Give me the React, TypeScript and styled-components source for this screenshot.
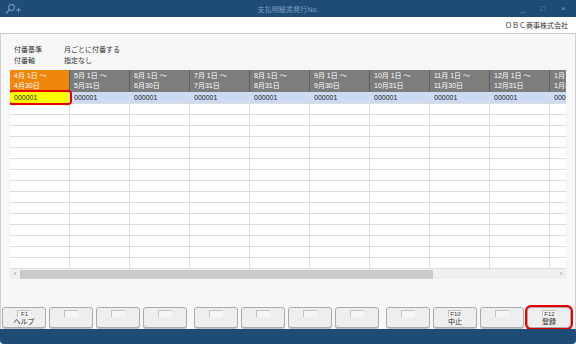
import styled, { createGlobalStyle } from "styled-components";

const GlobalStyle = createGlobalStyle`
  html, body {
    margin: 0;
    padding: 0;
    background: #ffffff;
  }
  body {
    font-family: "Liberation Sans", "Noto Sans CJK JP", sans-serif;
  }
`;

interface Period {
  from: string;
  to: string;
}

const periods: Period[] = [
  { from: "4月 1日 ～", to: "4月30日" },
  { from: "5月 1日 ～", to: "5月31日" },
  { from: "6月 1日 ～", to: "6月30日" },
  { from: "7月 1日 ～", to: "7月31日" },
  { from: "8月 1日 ～", to: "8月31日" },
  { from: "9月 1日 ～", to: "9月30日" },
  { from: "10月 1日 ～", to: "10月31日" },
  { from: "11月 1日 ～", to: "11月30日" },
  { from: "12月 1日 ～", to: "12月31日" },
  { from: "1月 1日 ～", to: "1月31日" },
];

const EMPTY_ROWS = 15;

const keyGroups: { key: string; label: string; marked?: boolean }[][] = [
  [{ key: "F1", label: "ヘルプ" }, { key: "", label: "" }, { key: "", label: "" }, { key: "", label: "" }],
  [{ key: "", label: "" }, { key: "", label: "" }, { key: "", label: "" }, { key: "", label: "" }],
  [{ key: "", label: "" }, { key: "F10", label: "中止" }, { key: "", label: "" }, { key: "F12", label: "登録", marked: true }],
];

const App = () => {
  return (
    <>
      <GlobalStyle />
      <Window>
        <TitleBar>
          <TitleIcon width="18" height="12" viewBox="0 0 18 12">
            <circle cx="7.5" cy="4.5" r="3" fill="none" stroke="#6d8db3" strokeWidth="1.3" />
            <line x1="5.4" y1="6.8" x2="2" y2="10.5" stroke="#6d8db3" strokeWidth="1.6" />
            <line x1="12" y1="7" x2="17" y2="7" stroke="#6d8db3" strokeWidth="1.1" />
            <line x1="14.5" y1="4.5" x2="14.5" y2="9.5" stroke="#6d8db3" strokeWidth="1.1" />
          </TitleIcon>
          <TitleText>支払明細書発行No.</TitleText>
          <WinControls>
            <WinButton>_</WinButton>
            <WinButton>□</WinButton>
            <WinButton>×</WinButton>
          </WinControls>
        </TitleBar>
        <CompanyBar>ＯＢＣ商事株式会社</CompanyBar>
        <Content>
          <Settings>
            <span>付番基準</span>
            <span>月ごとに付番する</span>
            <span>付番軸</span>
            <span>指定なし</span>
          </Settings>
          <Grid>
            <HeaderRow>
              {periods.map((p, i) => (
                <HeaderCell key={i} $active={i === 0}>
                  <div>{p.from}</div>
                  <div>{p.to}</div>
                </HeaderCell>
              ))}
            </HeaderRow>
            <Row $selected>
              {periods.map((_, i) => (
                <Cell key={i} $marked={i === 0}>
                  000001
                </Cell>
              ))}
            </Row>
            {Array.from({ length: EMPTY_ROWS }).map((_, r) => (
              <Row key={r}>
                {periods.map((_, i) => (
                  <Cell key={i} />
                ))}
              </Row>
            ))}
            <ScrollBar>
              <ScrollArrow>‹</ScrollArrow>
              <ScrollThumb />
              <ScrollTrack />
              <ScrollArrow>›</ScrollArrow>
            </ScrollBar>
          </Grid>
          <KeyBar>
            {keyGroups.map((group, g) => (
              <KeyGroup key={g}>
                {group.map((k, i) => (
                  <FnButton key={i} $marked={k.marked}>
                    <KeyLabel>{k.key}</KeyLabel>
                    <KeyCaption>{k.label}</KeyCaption>
                  </FnButton>
                ))}
              </KeyGroup>
            ))}
          </KeyBar>
        </Content>
        <StatusBar />
      </Window>
    </>
  );
};

export default App;

const Window = styled.div`
  width: 576px;
  height: 344px;
  display: flex;
  flex-direction: column;
  background: #f7f7f7;
  overflow: hidden;
`;

const TitleBar = styled.div`
  height: 17px;
  flex: 0 0 17px;
  background: #1e4c77;
  display: grid;
  grid-template-columns: 1fr auto 1fr;
  align-items: center;
`;

const TitleIcon = styled.svg`
  margin-left: 4px;
`;

const TitleText = styled.div`
  font-size: 7px;
  color: #7f9dc0;
  letter-spacing: 0.1px;
`;

const WinControls = styled.div`
  justify-self: end;
  display: flex;
  gap: 6px;
  padding-right: 6px;
`;

const WinButton = styled.span`
  width: 14px;
  text-align: center;
  font-size: 8px;
  line-height: 10px;
  color: #7f9dc0;
`;

const CompanyBar = styled.div`
  height: 16px;
  flex: 0 0 16px;
  background: #ffffff;
  border-bottom: 1px solid #c8c8c8;
  text-align: right;
  padding-right: 8px;
  font-size: 7px;
  line-height: 17px;
  color: #333333;
`;

const Content = styled.div`
  flex: 1;
  display: flex;
  flex-direction: column;
  padding-top: 10px;
  border-left: 1px solid #d0d0d0;
  border-right: 1px solid #d0d0d0;
`;

const Settings = styled.div`
  display: grid;
  grid-template-columns: 50px auto;
  margin-left: 13px;
  font-size: 7px;
  line-height: 11px;
  color: #333333;
`;

const Grid = styled.div`
  margin: 4px 0 0 9px;
  width: 556px;
  overflow: hidden;
`;

const HeaderRow = styled.div`
  display: flex;
  height: 22px;
`;

const HeaderCell = styled.div<{ $active?: boolean }>`
  flex: 0 0 60px;
  box-sizing: border-box;
  border-right: 1px solid #5f5f5f;
  background: ${(p) => (p.$active ? "#f0870d" : "#7d7d7d")};
  color: #ffffff;
  padding: 1px 0 0 4px;
  font-size: 7px;
  line-height: 10px;
  white-space: nowrap;
`;

const Row = styled.div<{ $selected?: boolean }>`
  display: flex;
  box-sizing: border-box;
  height: ${(p) => (p.$selected ? "12px" : "11px")};
  border-bottom: 1px solid #dedede;
  background: ${(p) => (p.$selected ? "#ccdaf4" : "#ffffff")};
`;

const Cell = styled.div<{ $marked?: boolean }>`
  flex: 0 0 60px;
  box-sizing: border-box;
  border-right: 1px solid #dedede;
  padding-left: 4px;
  font-size: 7px;
  line-height: 11px;
  color: #222222;
  ${(p) =>
    p.$marked &&
    `
    position: relative;
    z-index: 1;
    background: #ffff00;
    border-radius: 2px;
    box-shadow: 0 0 0 2px #e80000;
  `}
`;

const ScrollBar = styled.div`
  display: flex;
  align-items: center;
  height: 10px;
  background: #f0f0f0;
`;

const ScrollArrow = styled.div`
  flex: 0 0 10px;
  text-align: center;
  font-size: 8px;
  line-height: 10px;
  color: #9a9a9a;
`;

const ScrollThumb = styled.div`
  flex: 0 0 413px;
  height: 9px;
  background: #cbcbcb;
`;

const ScrollTrack = styled.div`
  flex: 1;
`;

const KeyBar = styled.div`
  margin-top: auto;
  display: flex;
  gap: 7px;
  padding: 0 0 1px 1px;
`;

const KeyGroup = styled.div`
  display: flex;
  gap: 3px;
`;

const FnButton = styled.div<{ $marked?: boolean }>`
  box-sizing: border-box;
  width: 44px;
  height: 21px;
  display: flex;
  flex-direction: column;
  align-items: center;
  padding-top: 2px;
  background: #eeeeee;
  border: 1px solid #ababab;
  border-radius: 3px;
  box-shadow: 0 1px 0 #c4c4c4;
  ${(p) =>
    p.$marked &&
    `
    border-radius: 4px;
    box-shadow: 0 0 0 2px #e80000;
  `}
`;

const KeyLabel = styled.div`
  box-sizing: border-box;
  min-width: 14px;
  height: 7px;
  padding: 0 1px;
  border-top: 1px solid #c2c2c2;
  border-left: 1px solid #c2c2c2;
  background: #f6f6f6;
  font-size: 6px;
  line-height: 6px;
  color: #333333;
  text-align: center;
`;

const KeyCaption = styled.div`
  font-size: 7px;
  line-height: 10px;
  color: #333333;
`;

const StatusBar = styled.div`
  flex: 0 0 15px;
  background: #1e4c77;
  border-radius: 0 0 4px 4px;
`;
